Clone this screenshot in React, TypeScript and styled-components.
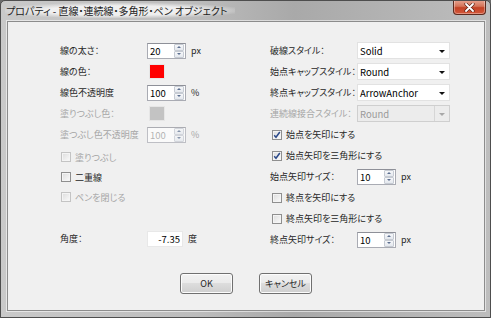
import React from "react";
import styled, {createGlobalStyle} from "styled-components";

const GlobalStyle = createGlobalStyle`
  html, body {
    margin: 0;
    padding: 0;
    background: #6b6b6b;
  }
  * {
    box-sizing: border-box;
  }
`;

const FONT = `"Noto Sans CJK JP", "Noto Sans", sans-serif`;
const TEXT = "#262626";
const DIM = "#a6a6a6";

const Window = styled.div`
  width: 491px;
  height: 318px;
  display: flex;
  flex-direction: column;
  border: 1px solid #4e4e4e;
  border-radius: 5px 5px 0 0;
  background: linear-gradient(90deg, #c9c9c9 0%, #bcbcbc 40%, #a9a9a9 60%, #bdbdbd 100%);
  font-family: ${FONT};
  font-feature-settings: "palt";
  overflow: hidden;
`;

const TitleBar = styled.div`
  height: 20px;
  display: flex;
  justify-content: space-between;
  align-items: flex-start;
  padding-left: 4px;
  padding-right: 4px;
`;

const Title = styled.div`
  margin-top: 2px;
  font-size: 10px;
  line-height: 15px;
  color: #1c1c1c;
  padding: 0 8px 0 1px;
  background: radial-gradient(ellipse at center, rgba(255, 255, 255, 0.75) 45%, rgba(255, 255, 255, 0) 78%);
`;

const CloseButton = styled.div`
  width: 33px;
  height: 15px;
  margin-top: -1px;
  display: flex;
  align-items: center;
  justify-content: center;
  border: 1px solid #5d2a1e;
  border-top: none;
  border-radius: 0 0 4px 4px;
  background: linear-gradient(180deg, #e8a693 0%, #d47358 45%, #c24225 55%, #d4583a 100%);
  box-shadow: inset 0 0 0 1px rgba(255, 255, 255, 0.35);
`;

const Client = styled.div`
  flex: 1;
  margin: 0 5px 6px 6px;
  border: 1px solid #8c8c8c;
  box-shadow: 0 0 0 1px rgba(255, 255, 255, 0.55);
  background: #f0f0f0;
  display: flex;
  flex-direction: column;
  padding: 18px 0 0 52px;
`;

const Form = styled.div`
  display: grid;
  grid-template-columns: 210px 1fr;
`;

const Column = styled.div`
  display: flex;
  flex-direction: column;
`;

const FieldRow = styled.div<{$top?: number}>`
  height: 21px;
  display: flex;
  align-items: center;
  margin-top: ${(p) => p.$top || 0}px;
`;

const CheckRow = styled.div<{$top?: number; $h?: number; $indent?: number}>`
  height: ${(p) => p.$h || 20}px;
  display: flex;
  align-items: center;
  padding-left: ${(p) => p.$indent ?? 1}px;
  margin-top: ${(p) => p.$top || 0}px;
`;

const Label = styled.div<{$disabled?: boolean}>`
  width: 87px;
  flex-shrink: 0;
  font-size: 9px;
  line-height: 13px;
  white-space: nowrap;
  color: ${(p) => (p.$disabled ? DIM : TEXT)};
`;

const Unit = styled.span<{$disabled?: boolean}>`
  margin-left: 5px;
  font-size: 9px;
  color: ${(p) => (p.$disabled ? DIM : TEXT)};
`;

const SpinBox = styled.div<{$disabled?: boolean}>`
  width: 39px;
  height: 16px;
  display: flex;
  border: 1px solid #a9abb3;
  border-top-color: #8e9098;
  background: #fff;
  opacity: ${(p) => (p.$disabled ? 0.7 : 1)};
`;

const SpinValue = styled.div<{$disabled?: boolean}>`
  flex: 1;
  font-size: 9.5px;
  line-height: 14px;
  padding-left: 2px;
  color: ${(p) => (p.$disabled ? "#9a9a9a" : "#000")};
`;

const SpinButtons = styled.div`
  width: 10px;
  display: flex;
  flex-direction: column;
  margin: 0 1px 0 0;
`;

const SpinHalf = styled.div<{$down?: boolean}>`
  flex: 1;
  display: flex;
  align-items: center;
  justify-content: center;
  border: 1px solid #c6cbd3;
  border-radius: 1px;
  background: linear-gradient(180deg, #f6f7f9, #e4e8ee);
  &::after {
    content: "";
    border-left: 2px solid transparent;
    border-right: 2px solid transparent;
    ${(p) => (p.$down ? "border-top: 2px solid #5c6f8f;" : "border-bottom: 2px solid #5c6f8f;")}
  }
`;

const TextBox = styled.div`
  width: 36px;
  height: 16px;
  border: 1px solid #e8e8e8;
  background: #fff;
  font-size: 9.5px;
  line-height: 14px;
  text-align: right;
  padding-right: 2px;
  color: #000;
`;

const Swatch = styled.div<{$color: string}>`
  width: 16px;
  height: 15px;
  margin-left: 2px;
  background: ${(p) => p.$color};
  border: 1px solid #e6e6e6;
`;

const Select = styled.div<{$disabled?: boolean}>`
  width: 93px;
  height: 17px;
  display: flex;
  align-items: center;
  border: 1px solid ${(p) => (p.$disabled ? "#cfcfcf" : "#e2e2e2")};
  background: ${(p) => (p.$disabled ? "#ececec" : "#fff")};
  font-size: 9.5px;
  color: ${(p) => (p.$disabled ? "#9a9a9a" : "#000")};
  padding-left: 2px;
`;

const SelectText = styled.div`
  flex: 1;
  line-height: 14px;
`;

const SelectArrow = styled.div<{$disabled?: boolean}>`
  width: 15px;
  height: 100%;
  display: flex;
  align-items: center;
  justify-content: center;
  border-left: 1px solid ${(p) => (p.$disabled ? "#d6d6d6" : "transparent")};
  &::after {
    content: "";
    margin-top: 2px;
    border-left: 3px solid transparent;
    border-right: 3px solid transparent;
    border-top: 3px solid ${(p) => (p.$disabled ? "#a8a8a8" : "#111")};
  }
`;

const Box = styled.div<{$disabled?: boolean}>`
  width: 10px;
  height: 10px;
  display: flex;
  align-items: center;
  justify-content: center;
  border: 1px solid ${(p) => (p.$disabled ? "#c4c4c4" : "#8f8f8f")};
  background: linear-gradient(135deg, #dcdcdc, #fbfbfb);
  box-shadow: inset 0 0 0 1px #f4f4f4;
`;

const CheckText = styled.span<{$disabled?: boolean}>`
  margin-left: 4px;
  font-size: 9px;
  line-height: 13px;
  color: ${(p) => (p.$disabled ? DIM : TEXT)};
`;

const Buttons = styled.div`
  display: flex;
  justify-content: center;
  gap: 26px;
  margin-top: 23px;
  margin-left: -52px;
`;

const Button = styled.div`
  width: 53px;
  height: 21px;
  display: flex;
  align-items: center;
  justify-content: center;
  border: 1px solid #707070;
  border-radius: 3px;
  background: linear-gradient(180deg, #f2f2f2 0%, #ebebeb 45%, #dddddd 50%, #cfcfcf 100%);
  box-shadow: inset 0 0 0 1px #fcfcfc;
  font-size: 9px;
  color: ${TEXT};
`;

const Spin = ({value, disabled}: {value: string; disabled?: boolean}) => (
  <SpinBox $disabled={disabled}>
    <SpinValue $disabled={disabled}>{value}</SpinValue>
    <SpinButtons>
      <SpinHalf />
      <SpinHalf $down />
    </SpinButtons>
  </SpinBox>
);

const Check = ({text, checked, disabled}: {text: string; checked?: boolean; disabled?: boolean}) => (
  <>
    <Box $disabled={disabled}>
      {checked && (
        <svg width="8" height="8" viewBox="0 0 8 8">
          <path d="M1.2 4.2 L3 6.3 L6.8 1" fill="none" stroke="#2c4a8a" strokeWidth="1.5" />
        </svg>
      )}
    </Box>
    <CheckText $disabled={disabled}>{text}</CheckText>
  </>
);

const Dropdown = ({value, disabled}: {value: string; disabled?: boolean}) => (
  <Select $disabled={disabled}>
    <SelectText>{value}</SelectText>
    <SelectArrow $disabled={disabled} />
  </Select>
);

export default function App() {
  return (
    <>
      <GlobalStyle />
      <Window>
        <TitleBar>
          <Title>プロパティ - 直線・連続線・多角形・ペン オブジェクト</Title>
          <CloseButton>
            <svg width="11" height="9" viewBox="0 0 11 9">
              <path d="M2 1 L9 8 M9 1 L2 8" stroke="#5a2418" strokeWidth="3.2" strokeLinecap="round" />
              <path d="M2 1 L9 8 M9 1 L2 8" stroke="#ffffff" strokeWidth="1.8" strokeLinecap="round" />
            </svg>
          </CloseButton>
        </TitleBar>
        <Client>
          <Form>
            <Column>
              <FieldRow>
                <Label>線の太さ：</Label>
                <Spin value="20" />
                <Unit>px</Unit>
              </FieldRow>
              <FieldRow>
                <Label>線の色：</Label>
                <Swatch $color="#ff0000" />
              </FieldRow>
              <FieldRow>
                <Label>線色不透明度</Label>
                <Spin value="100" />
                <Unit>%</Unit>
              </FieldRow>
              <FieldRow>
                <Label $disabled>塗りつぶし色：</Label>
                <Swatch $color="#c3c3c3" />
              </FieldRow>
              <FieldRow>
                <Label $disabled>塗つぶし色不透明度</Label>
                <Spin value="100" disabled />
                <Unit $disabled>%</Unit>
              </FieldRow>
              <CheckRow $top={2}>
                <Check text="塗りつぶし" disabled />
              </CheckRow>
              <CheckRow>
                <Check text="二重線" />
              </CheckRow>
              <CheckRow>
                <Check text="ペンを閉じる" disabled />
              </CheckRow>
              <FieldRow $top={21}>
                <Label>角度：</Label>
                <TextBox>-7.35</TextBox>
                <Unit>度</Unit>
              </FieldRow>
            </Column>
            <Column>
              <FieldRow>
                <Label>破線スタイル：</Label>
                <Dropdown value="Solid" />
              </FieldRow>
              <FieldRow>
                <Label>始点キャップスタイル：</Label>
                <Dropdown value="Round" />
              </FieldRow>
              <FieldRow>
                <Label>終点キャップスタイル：</Label>
                <Dropdown value="ArrowAnchor" />
              </FieldRow>
              <FieldRow>
                <Label $disabled>連続線接合スタイル：</Label>
                <Dropdown value="Round" disabled />
              </FieldRow>
              <CheckRow $h={21} $indent={2}>
                <Check text="始点を矢印にする" checked />
              </CheckRow>
              <CheckRow $h={21} $indent={2}>
                <Check text="始点矢印を三角形にする" checked />
              </CheckRow>
              <FieldRow>
                <Label>始点矢印サイズ：</Label>
                <Spin value="10" />
                <Unit>px</Unit>
              </FieldRow>
              <CheckRow $h={21} $indent={2}>
                <Check text="終点を矢印にする" />
              </CheckRow>
              <CheckRow $h={21} $indent={2}>
                <Check text="終点矢印を三角形にする" />
              </CheckRow>
              <FieldRow>
                <Label>終点矢印サイズ：</Label>
                <Spin value="10" />
                <Unit>px</Unit>
              </FieldRow>
            </Column>
          </Form>
          <Buttons>
            <Button>OK</Button>
            <Button>キャンセル</Button>
          </Buttons>
        </Client>
      </Window>
    </>
  );
}
